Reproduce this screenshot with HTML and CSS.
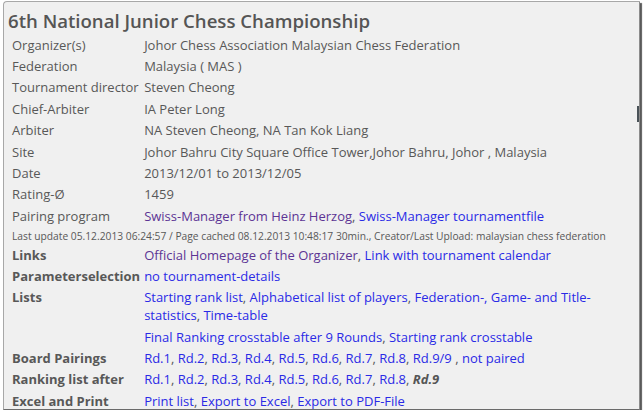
FILE: index.html
```html
<!DOCTYPE html>
<html lang="en">
<head>
    <meta charset="UTF-8">
    <title>6th National Junior Chess Championship</title>
    <link rel="stylesheet" href="styles.css">
</head>
<body>
    <div class="frame">
        <div class="scroll-thumb"></div>
        <h2 class="title">6th National Junior Chess Championship</h2>
        <table class="info">
            <tr><td class="label">Organizer(s)</td><td>Johor Chess Association Malaysian Chess Federation</td></tr>
            <tr><td class="label">Federation</td><td>Malaysia ( MAS )</td></tr>
            <tr><td class="label">Tournament director</td><td>Steven Cheong</td></tr>
            <tr><td class="label">Chief-Arbiter</td><td>IA Peter Long</td></tr>
            <tr><td class="label">Arbiter</td><td>NA Steven Cheong, NA Tan Kok Liang</td></tr>
            <tr><td class="label">Site</td><td>Johor Bahru City Square Office Tower,Johor Bahru, Johor , Malaysia</td></tr>
            <tr><td class="label">Date</td><td>2013/12/01 to 2013/12/05</td></tr>
            <tr><td class="label">Rating-Ø</td><td>1459</td></tr>
            <tr><td class="label">Pairing program</td><td><a href="#" class="visited">Swiss-Manager from Heinz Herzog</a>, <a href="#">Swiss-Manager tournamentfile</a></td></tr>
            <tr><td colspan="2" class="small">Last update 05.12.2013 06:24:57 / Page cached 08.12.2013 10:48:17 30min., Creator/Last Upload: malaysian chess federation</td></tr>
            <tr><td class="label bold">Links</td><td><a href="#" class="visited">Official Homepage of the Organizer</a>, <a href="#">Link with tournament calendar</a></td></tr>
            <tr><td class="label bold">Parameterselection</td><td><a href="#">no tournament-details</a></td></tr>
            <tr><td class="label bold">Lists</td><td><a href="#">Starting rank list</a>, <a href="#">Alphabetical list of players</a>, <a href="#">Federation-, Game- and Title-statistics</a>, <a href="#">Time-table</a></td></tr>
            <tr><td class="label"></td><td><a href="#">Final Ranking crosstable after 9 Rounds</a>, <a href="#">Starting rank crosstable</a></td></tr>
            <tr><td class="label bold">Board Pairings</td><td><a href="#">Rd.1</a>, <a href="#">Rd.2</a>, <a href="#">Rd.3</a>, <a href="#">Rd.4</a>, <a href="#">Rd.5</a>, <a href="#">Rd.6</a>, <a href="#">Rd.7</a>, <a href="#">Rd.8</a>, <a href="#">Rd.9/9</a> , <a href="#">not paired</a></td></tr>
            <tr><td class="label bold">Ranking list after</td><td><a href="#">Rd.1</a>, <a href="#">Rd.2</a>, <a href="#">Rd.3</a>, <a href="#">Rd.4</a>, <a href="#">Rd.5</a>, <a href="#">Rd.6</a>, <a href="#">Rd.7</a>, <a href="#">Rd.8</a>, <b class="current">Rd.9</b></td></tr>
            <tr><td class="label bold">Excel and Print</td><td><a href="#">Print list</a>, <a href="#">Export to Excel</a>, <a href="#">Export to PDF-File</a></td></tr>
        </table>
    </div>
</body>
</html>
```

FILE: styles.css
```css
/* Page */
body {
    margin: 0;
    background-color: #ffffff;
    font-family: "Open Sans", Arial, sans-serif;
    color: #585858;
}

/* Window frame */
.frame {
    position: relative;
    width: 637px;
    height: 409px;
    margin: 1px 0 0 3px;
    padding: 0 0 0 6px;
    box-sizing: border-box;
    background-color: #f0f0f0;
    border: 1px solid #a8a8a8;
    border-right-color: #8c8c8c;
    border-bottom-color: #6a6a6a;
    border-radius: 4px 0 0 0;
    box-shadow: 2px 2px 1px #5a5a5a;
}
.scroll-thumb {
    position: absolute;
    right: 0;
    top: 104px;
    width: 2px;
    height: 16px;
    background-color: #4a5258;
}

/* Title */
.title {
    margin: 8px 0 2px -2px;
    font-size: 18.6px;
    font-weight: 600;
    line-height: 22px;
    color: #555555;
}

/* Info table */
.info {
    border-collapse: collapse;
    font-size: 13px;
    line-height: 18px;
}
.info td {
    padding: 1.7px 2px;
    vertical-align: top;
}
.info td.label {
    width: 124px;
    white-space: nowrap;
}
.info td.bold {
    font-weight: bold;
}
.info td.small {
    font-size: 10.25px;
    line-height: 15px;
    padding: 2.5px 2px 0 2px;
    white-space: nowrap;
}
.info a {
    color: #2a2ae6;
    text-decoration: none;
}
.info a.visited {
    color: #5c3494;
}
.info .current {
    font-style: italic;
    color: #555555;
}
```
